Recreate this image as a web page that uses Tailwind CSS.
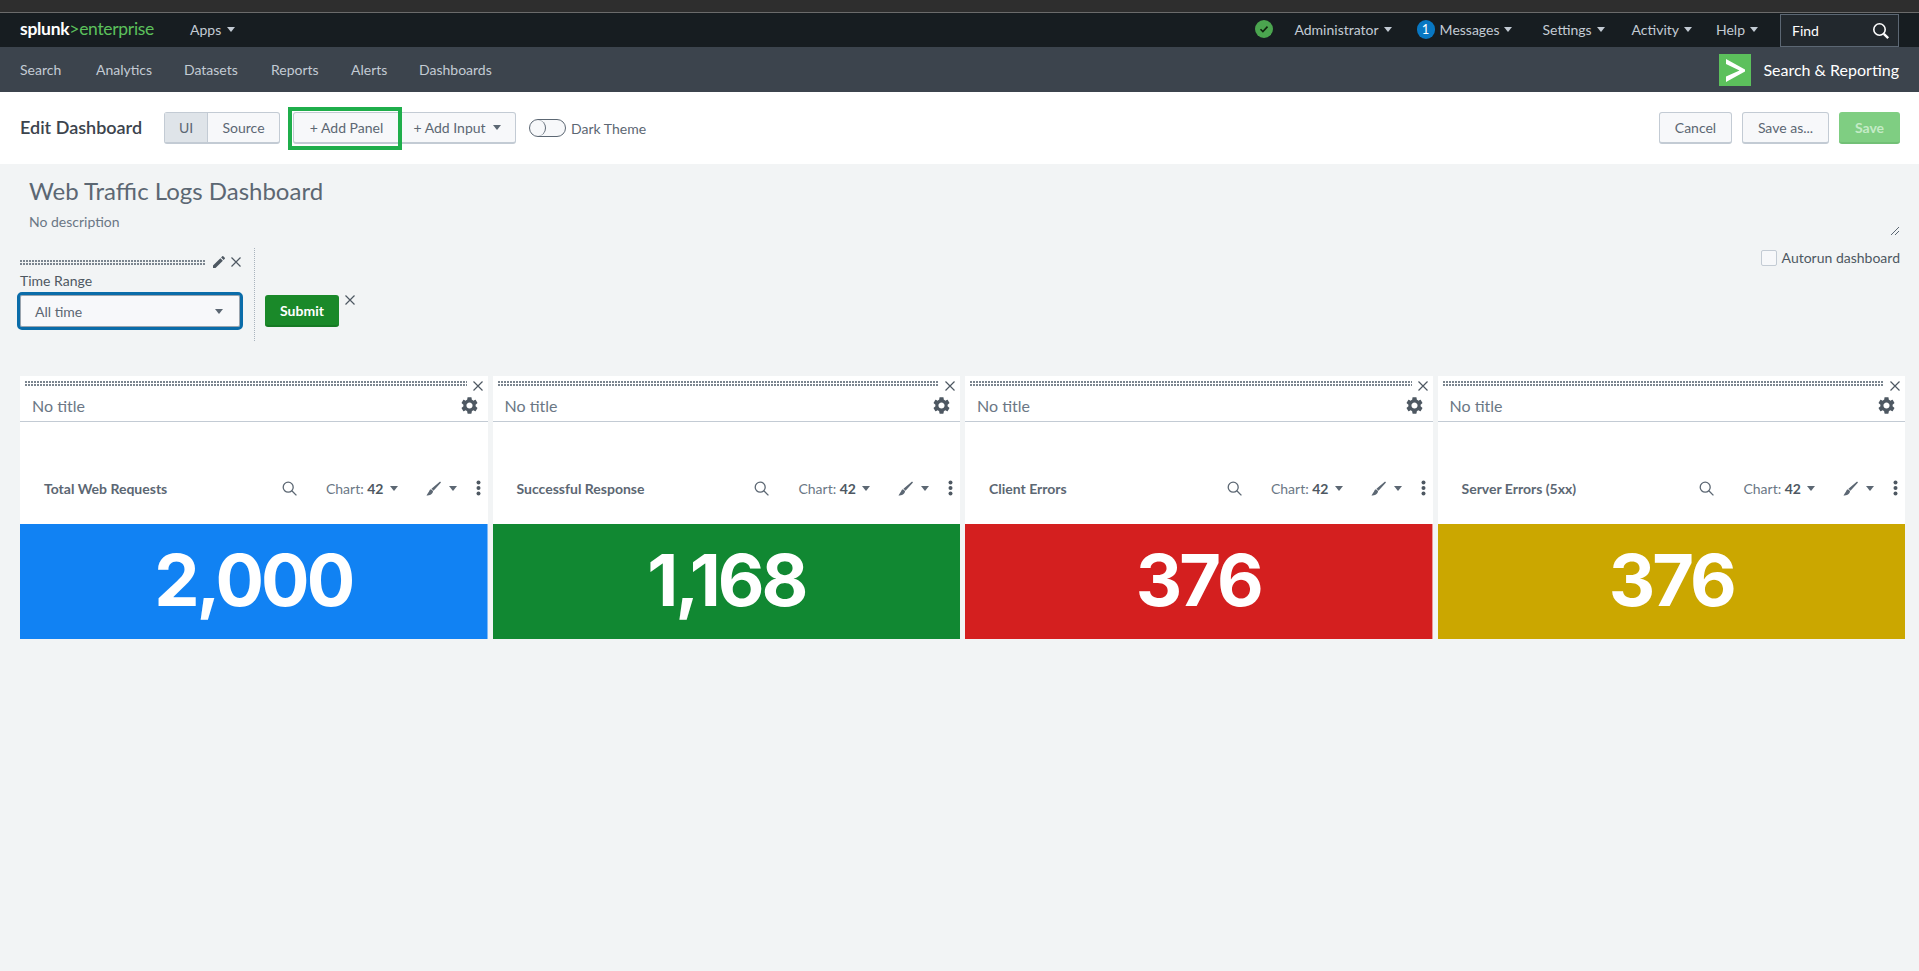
<!DOCTYPE html>
<html lang="en">
<head>
    <meta charset="UTF-8">
    <title>Web Traffic Logs Dashboard</title>
    <script src="https://cdn.jsdelivr.net/npm/@tailwindcss/browser@4"></script>
</head>
<body class="bg-[#f2f4f5] min-h-screen [font-family:Lato,sans-serif] text-[14px] text-[#5c6773] overflow-hidden">
    <!-- top strip -->
    <div class="h-[13px] bg-[#2e2e2e] border-b border-[#6b6b6b]"></div>

    <!-- system nav -->
    <nav class="h-[34px] bg-[#171d21] flex items-center pl-[20px] pr-[20px] pb-[2px] text-[#c3cbd4]">
        <div class="w-[170px] text-[17.500px] leading-none tracking-[-0.3px] whitespace-nowrap"><span class="text-white font-bold">splunk</span><span class="text-[#5cc05c]">&gt;enterprise</span></div>
        <div class="flex items-center gap-[6px]">Apps <span class="w-0 h-0 border-x-[4px] border-t-[5px] border-x-transparent border-t-[#c3cbd4]"></span></div>
        <div class="ml-auto flex items-center h-full">
            <svg class="w-[18px] h-[18px] mr-[21px]" viewBox="0 0 18 18"><circle cx="9" cy="9" r="9" fill="#4ba54f"/><path d="M5.5 9.2l2.4 2.4 4.6-5" fill="none" stroke="#10240f" stroke-width="1.6"/></svg>
            <div class="flex items-center gap-[5px] mr-[25px]">Administrator <span class="w-0 h-0 border-x-[4px] border-t-[5px] border-x-transparent border-t-[#c3cbd4]"></span></div>
            <span class="w-[18px] h-[19px] rounded-full bg-[#0877c2] text-white text-center leading-[19px] text-[13px] mr-[5px]">1</span>
            <div class="flex items-center gap-[5px] mr-[30px]">Messages <span class="w-0 h-0 border-x-[4px] border-t-[5px] border-x-transparent border-t-[#c3cbd4]"></span></div>
            <div class="flex items-center gap-[5px] mr-[27px]">Settings <span class="w-0 h-0 border-x-[4px] border-t-[5px] border-x-transparent border-t-[#c3cbd4]"></span></div>
            <div class="flex items-center gap-[5px] mr-[24px]">Activity <span class="w-0 h-0 border-x-[4px] border-t-[5px] border-x-transparent border-t-[#c3cbd4]"></span></div>
            <div class="flex items-center gap-[5px] mr-[22px]">Help <span class="w-0 h-0 border-x-[4px] border-t-[5px] border-x-transparent border-t-[#c3cbd4]"></span></div>
            <div class="w-[119px] h-[33px] mt-[3px] border border-[#5c6773] bg-[#22282d] flex items-center justify-between pl-[11px] pr-[8px] text-white">
                Find
                <svg class="w-[18px] h-[18px]" viewBox="0 0 18 18" fill="none" stroke="#fff" stroke-width="1.6"><circle cx="7.5" cy="7.5" r="5.7"/><path d="M11.8 11.8l4.4 4.4" stroke-width="2.4"/></svg>
            </div>
        </div>
    </nav>

    <!-- app bar -->
    <div class="h-[45px] bg-[#3c444d] flex items-center pl-[20px] pr-[20px] text-[#c3cbd4]">
        <a class="w-[76px]">Search</a>
        <a class="w-[88px]">Analytics</a>
        <a class="w-[87px]">Datasets</a>
        <a class="w-[80px]">Reports</a>
        <a class="w-[68px]">Alerts</a>
        <a>Dashboards</a>
        <div class="ml-auto flex items-center gap-[12px]">
            <svg class="w-[32px] h-[32px]" viewBox="0 0 32 32"><rect width="32" height="32" fill="#5cc05c"/><path d="M7 5l19 10.5v2L7 28v-5.5L20.5 16.5 7 10z" fill="#fff"/></svg>
            <span class="text-white text-[16px]">Search &amp; Reporting</span>
        </div>
    </div>

    <!-- edit bar -->
    <div class="h-[72px] bg-white flex items-center pl-[20px] pr-[19px]">
        <h2 class="text-[18px] font-semibold text-[#3c444d] w-[144px] -mt-[2px]">Edit Dashboard</h2>
        <div class="flex h-[32px] rounded-[3px] border border-[#c3cbd4] border-b-2 bg-[#f7f8fa]">
            <span class="w-[43px] flex items-center justify-center bg-[#dfe4e9] border-r border-[#c3cbd4]">UI</span>
            <span class="w-[71px] flex items-center justify-center">Source</span>
        </div>
        <div class="relative flex ml-[13px] h-[32px] rounded-[3px] border border-[#c3cbd4] border-b-2 bg-[#f7f8fa]">
            <span class="w-[105px] flex items-center justify-center">+ Add Panel</span>
            <span class="w-[116px] flex items-center justify-center gap-[7px]">+ Add Input <span class="w-0 h-0 border-x-[4px] border-t-[5px] border-x-transparent border-t-[#5c6773]"></span></span>
            <div class="absolute -left-[6px] -top-[6px] w-[114px] h-[43px] border-[4px] border-[#1fae4b]"></div>
        </div>
        <div class="ml-[13px] w-[37px] h-[18px] rounded-full border border-[#5c6773] bg-[#f7f8fa] flex">
            <span class="w-[16px] h-full rounded-full border-r border-[#5c6773]"></span>
        </div>
        <span class="ml-[5px]">Dark Theme</span>
        <div class="ml-auto flex gap-[10px]">
            <span class="w-[73px] h-[32px] flex items-center justify-center rounded-[3px] border border-[#c3cbd4] border-b-2 bg-[#f7f8fa]">Cancel</span>
            <span class="w-[87px] h-[32px] flex items-center justify-center rounded-[3px] border border-[#c3cbd4] border-b-2 bg-[#f7f8fa]">Save as...</span>
            <span class="w-[61px] h-[32px] flex items-center justify-center rounded-[3px] bg-[#7fce82] border-b-2 border-[#72c076] text-[#c4ebc6] font-bold">Save</span>
        </div>
    </div>

    <!-- dashboard head -->
    <div class="relative h-[74px] pl-[29px] pt-[13px]">
        <h1 class="text-[24px] leading-[28px] font-normal text-[#5c6773]">Web Traffic Logs Dashboard</h1>
        <p class="mt-[8px] leading-[18px] text-[#6b7785]">No description</p>
        <svg class="absolute right-[19px] bottom-[2px] w-[10px] h-[10px]" viewBox="0 0 10 10" stroke="#5c6773" fill="none"><path d="M1 9l8-8M5 9l4-4"/></svg>
    </div>

    <!-- inputs -->
    <div class="h-[138px] pl-[17px] pr-[19px] pt-[9px] flex items-start">
        <div class="w-[226px] pt-[9px]">
            <div class="flex items-center h-[12px] pl-[3px]">
                <div class="w-[186px] h-[5px] bg-[conic-gradient(at_2px_2px,transparent_75%,#7b858f_75%)] bg-size-[3px_3px]"></div>
                <svg class="w-[12px] h-[12px] ml-[7px]" viewBox="3 3 18 18" fill="#4e5862"><path d="M3 17.25V21h3.75L17.81 9.94l-3.75-3.75L3 17.25zM20.71 7.04c.39-.39.39-1.02 0-1.41l-2.34-2.34c-.39-.39-1.02-.39-1.41 0l-1.83 1.83 3.75 3.75 1.83-1.83z"/></svg>
                <svg class="w-[10px] h-[10px] ml-[6px]" viewBox="0 0 10 10" stroke="#4e5862" stroke-width="1.2"><path d="M.5.5l9 9M9.5.5l-9 9"/></svg>
            </div>
            <div class="mt-[3px] pl-[3px] leading-[20px] text-[#4e5862]">Time Range</div>
            <div class="mt-[1px] h-[38px] rounded-[5px] border-[3px] border-[#0a6ca9] bg-[#f7f8fa] flex items-center justify-between pl-[15px] pr-[17px] shadow-[inset_0_0_0_1px_#9aa4ae]">
                All time
                <span class="w-0 h-0 border-x-[4px] border-t-[5px] border-x-transparent border-t-[#5c6773]"></span>
            </div>
        </div>
        <div class="ml-[11px] mt-[1px] h-[93px] border-l border-dotted border-[#a9b3bd]"></div>
        <div class="ml-[10px] mt-[48px] w-[74px] h-[32px] rounded-[3px] bg-[#1a8929] border-b-2 border-[#167a24] flex items-center justify-center text-white font-bold">Submit</div>
        <svg class="w-[10px] h-[10px] ml-[6px] mt-[48px]" viewBox="0 0 10 10" stroke="#4e5862" stroke-width="1.2"><path d="M.5.5l9 9M9.5.5l-9 9"/></svg>
        <label class="ml-auto mt-0 flex items-center gap-[5px] text-[#4e5862]">
            <span class="w-[16px] h-[16px] rounded-[2px] border border-[#c3cbd4] bg-[#f7f8fa]"></span>
            Autorun dashboard
        </label>
    </div>

    <!-- panels -->
    <div id="panels" class="grid grid-cols-4 gap-[5px] pl-[20px] pr-[14px]"></div>

    <script>
        const panels = [
            { title: 'Total Web Requests', value: '2,000', color: 'bg-[#1182f3]', edge: 'border-r border-[#7db9f7]' },
            { title: 'Successful Response', value: '1,168', color: 'bg-[#118832]', edge: '' },
            { title: 'Client Errors', value: '376', color: 'bg-[#d41f1f]', edge: 'border-r border-[#eb9a9a]' },
            { title: 'Server Errors (5xx)', value: '376', color: 'bg-[#cba700]', edge: '' },
        ];

        document.getElementById('panels').innerHTML = panels.map(p => `
            <section class="bg-white h-[263px] flex flex-col">
                <div class="h-[46px] border-b border-[#c3cbd4] pl-[5px] pr-[5px] pt-[5px]">
                    <div class="flex items-start">
                        <div class="flex-1 h-[5px] bg-[conic-gradient(at_2px_2px,transparent_75%,#7b858f_75%)] bg-size-[3px_3px]"></div>
                        <svg class="w-[10px] h-[10px] ml-[6px] mr-[0px]" viewBox="0 0 10 10" stroke="#4e5862" stroke-width="1.2"><path d="M.5.5l9 9M9.5.5l-9 9"/></svg>
                    </div>
                    <div class="flex items-center justify-between pl-[7px] pr-[5px] mt-[3px]">
                        <span class="text-[16px] leading-[24px] text-[#6b7785]">No title</span>
                        <svg class="w-[17px] h-[17px] -mt-[1px]" viewBox="2 2 20 20" fill="#4e5862"><path d="M19.14 12.94c.04-.3.06-.61.06-.94 0-.32-.02-.64-.07-.94l2.03-1.58c.18-.14.23-.41.12-.61l-1.92-3.32c-.12-.22-.37-.29-.59-.22l-2.39.96c-.5-.38-1.03-.7-1.62-.94l-.36-2.54c-.04-.24-.24-.41-.48-.41h-3.84c-.24 0-.43.17-.47.41l-.36 2.54c-.59.24-1.13.57-1.62.94l-2.39-.96c-.22-.08-.47 0-.59.22L2.74 8.87c-.12.21-.08.47.12.61l2.03 1.58c-.05.3-.09.63-.09.94s.02.64.07.94l-2.03 1.58c-.18.14-.23.41-.12.61l1.92 3.32c.12.22.37.29.59.22l2.39-.96c.5.38 1.03.7 1.62.94l.36 2.54c.05.24.24.41.48.41h3.84c.24 0 .44-.17.47-.41l.36-2.54c.59-.24 1.13-.56 1.62-.94l2.39.96c.22.08.47 0 .59-.22l1.92-3.32c.12-.22.07-.47-.12-.61l-2.01-1.58zM12 15.6c-1.98 0-3.6-1.62-3.6-3.6s1.62-3.6 3.6-3.6 3.6 1.62 3.6 3.6-1.62 3.6-3.6 3.6z"/></svg>
                    </div>
                </div>
                <div class="flex-1 flex items-center pl-[24px] pr-[7px] pt-[30px] text-[#5c6773]">
                    <span class="text-[14px] font-bold text-[#5c6773]">${p.title}</span>
                    <svg class="w-[15px] h-[15px] ml-auto" viewBox="0 0 15 15" fill="none" stroke="#5c6773" stroke-width="1.3"><circle cx="6.2" cy="6.2" r="5"/><path d="M9.8 9.8l4.6 4.6"/></svg>
                    <span class="ml-[29px] text-[#6b7785]">Chart: <b class="text-[#4e5862]">42</b></span>
                    <span class="ml-[6px] w-0 h-0 border-x-[4px] border-t-[5px] border-x-transparent border-t-[#5c6773]"></span>
                    <svg class="ml-[28px] w-[15px] h-[15px]" viewBox="0 0 16 16" fill="#5c6773"><path d="M15 .5l1 1-8 9-2.2-2.2zM5.3 8.7c-2 .4-1.6 2.600-3 3.800L.5 15.500c3.500 0 7-1.500 7-4.800z"/></svg>
                    <span class="ml-[8px] w-0 h-0 border-x-[4px] border-t-[5px] border-x-transparent border-t-[#5c6773]"></span>
                    <svg class="ml-[19px] w-[5px] h-[16px]" viewBox="0 0 5 16" fill="#4e5862"><circle cx="2.500" cy="2.500" r="2"/><circle cx="2.500" cy="8" r="2"/><circle cx="2.500" cy="13.500" r="2"/></svg>
                </div>
                <div class="${p.color} ${p.edge} h-[115px] flex items-center justify-center pb-[4px] text-white text-[72px] [font-family:Inter,sans-serif] tracking-[-3px] font-bold leading-none">${p.value}</div>
            </section>`).join('');
    </script>
</body>
</html>
